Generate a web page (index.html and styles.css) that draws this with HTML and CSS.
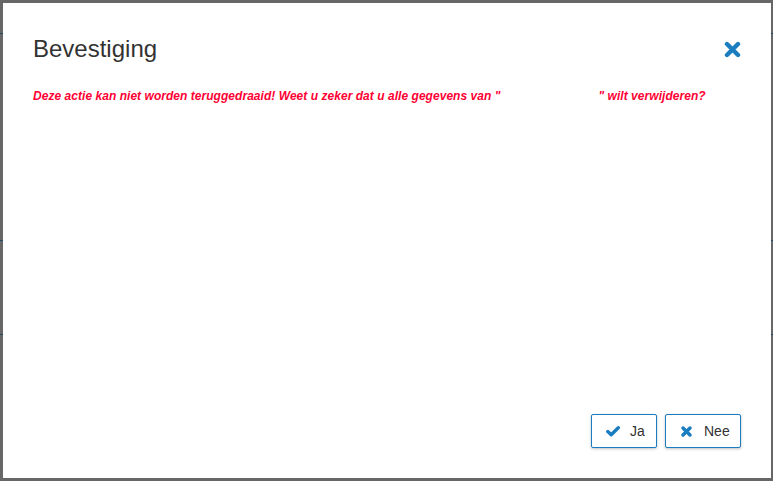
FILE: index.html
```html
<!DOCTYPE html>
<html lang="nl">
<head>
<meta charset="utf-8">
<title>Bevestiging</title>
<link rel="stylesheet" href="styles.css">
</head>
<body>
<div class="modal">
  <div class="modal-header">
    <h1 class="modal-title">Bevestiging</h1>
    <button class="close" aria-label="Sluiten">
      <svg width="17" height="17" viewBox="0 0 17 17"><path d="M3 3 L14 14 M14 3 L3 14" stroke="#1a7dc0" stroke-width="4.4" stroke-linecap="round" fill="none"/></svg>
    </button>
  </div>
  <p class="warning">Deze actie kan niet worden teruggedraaid! Weet u zeker dat u alle gegevens van "<span class="name"></span>" wilt verwijderen?</p>
  <div class="modal-footer">
    <button class="btn btn-ja">
      <svg class="ico" width="14" height="11" viewBox="0 0 14 11"><path d="M1.8 5.6 L5.2 8.8 L12.3 1.8" stroke="#1a7dc0" stroke-width="3.4" fill="none" stroke-linecap="round" stroke-linejoin="round"/></svg>
      <span>Ja</span>
    </button>
    <button class="btn btn-nee">
      <svg class="ico" width="11" height="11" viewBox="0 0 11 11"><path d="M2 2 L9 9 M9 2 L2 9" stroke="#1a7dc0" stroke-width="3.4" fill="none" stroke-linecap="round"/></svg>
      <span>Nee</span>
    </button>
  </div>
</div>
</body>
</html>
```
FILE: styles.css
```css
html, body {
  margin: 0;
  padding: 0;
  height: 100%;
}
body {
  background-color: #676767;
  background-image:
    linear-gradient(to bottom, transparent 33px, #1f4a66 33px, #1f4a66 34px, transparent 34px),
    linear-gradient(to bottom, transparent 240px, #1f4a66 240px, #1f4a66 241px, transparent 241px),
    linear-gradient(to bottom, transparent 334px, #1f4a66 334px, #1f4a66 335px, transparent 335px);
  font-family: "Liberation Sans", Arial, sans-serif;
  overflow: hidden;
}
.modal {
  box-sizing: border-box;
  margin: 3px 0 0 3px;
  width: 768px;
  height: 475px;
  background: #fff;
  padding: 0 30px 30px 30px;
  display: flex;
  flex-direction: column;
}
.modal-header {
  display: flex;
  align-items: center;
  justify-content: space-between;
  padding-top: 32px;
}
.modal-title {
  margin: 0;
  font-size: 24px;
  font-weight: normal;
  line-height: 28px;
  color: #333;
}
.close {
  border: 0;
  background: none;
  padding: 0;
  width: 17px;
  height: 17px;
  display: flex;
}
.warning {
  margin: 26px 0 0 0;
  font-size: 12px;
  font-weight: bold;
  font-style: italic;
  line-height: 15px;
  letter-spacing: 0.04px;
  color: #ff0033;
}
.name {
  display: inline-block;
  width: 98px;
}
.modal-footer {
  margin-top: auto;
  display: flex;
  justify-content: flex-end;
  gap: 8px;
}
.btn {
  box-sizing: border-box;
  height: 34px;
  background: #fff;
  border: 1px solid #1a7dc0;
  border-radius: 2px;
  box-shadow: 0 1px 3px rgba(0,0,0,0.25);
  font-family: "Liberation Sans", Arial, sans-serif;
  font-size: 14px;
  color: #333;
  display: flex;
  align-items: center;
  padding: 0 0 0 14px;
}
.btn-ja { width: 66px; }
.btn-ja .ico { margin-right: 10px; }
.btn-nee { width: 76px; padding-left: 15px; }
.btn-nee .ico { margin-right: 12px; }
.ico { display: block; }
```
